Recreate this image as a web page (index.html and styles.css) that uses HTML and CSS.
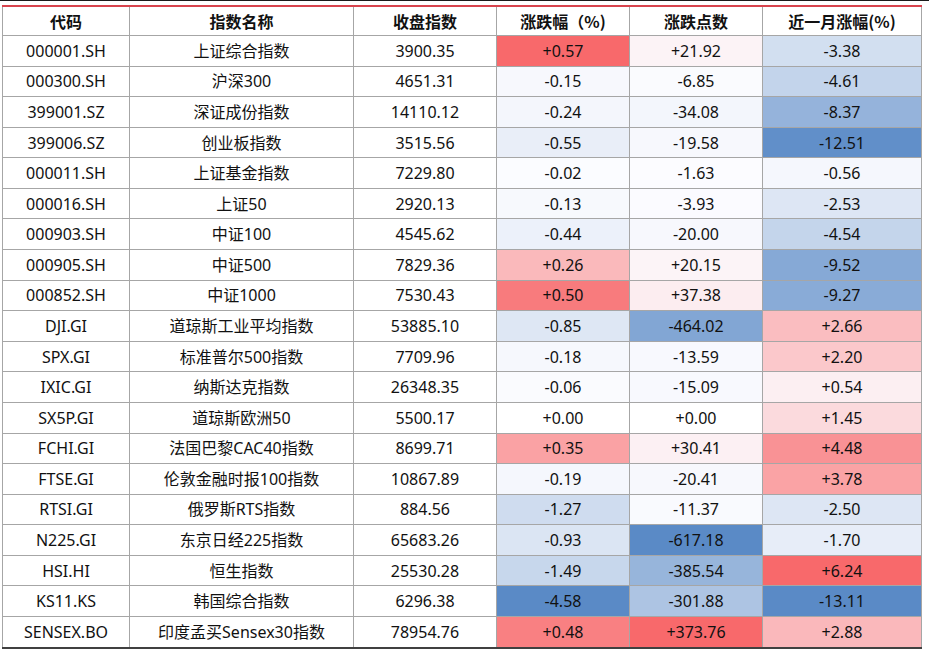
FILE: index.html
```html
<!DOCTYPE html>
<html lang="zh-CN">
<head>
<meta charset="utf-8">
<title>指数表现</title>
<link rel="stylesheet" href="styles.css">
</head>
<body>
<div class="topline"></div>
<div class="sheet">
  <div class="grid" id="grid">
    <div class="h">代码</div><div class="h">指数名称</div><div class="h">收盘指数</div><div class="h">涨跌幅（%)</div><div class="h">涨跌点数</div><div class="h">近一月涨幅(%)</div>
    <div>000001.SH</div><div>上证综合指数</div><div>3900.35</div><div class="c1">+0.57</div><div class="c2">+21.92</div><div class="c3">-3.38</div>
    <div>000300.SH</div><div>沪深300</div><div>4651.31</div><div class="c1">-0.15</div><div class="c2">-6.85</div><div class="c3">-4.61</div>
    <div>399001.SZ</div><div>深证成份指数</div><div>14110.12</div><div class="c1">-0.24</div><div class="c2">-34.08</div><div class="c3">-8.37</div>
    <div>399006.SZ</div><div>创业板指数</div><div>3515.56</div><div class="c1">-0.55</div><div class="c2">-19.58</div><div class="c3">-12.51</div>
    <div>000011.SH</div><div>上证基金指数</div><div>7229.80</div><div class="c1">-0.02</div><div class="c2">-1.63</div><div class="c3">-0.56</div>
    <div>000016.SH</div><div>上证50</div><div>2920.13</div><div class="c1">-0.13</div><div class="c2">-3.93</div><div class="c3">-2.53</div>
    <div>000903.SH</div><div>中证100</div><div>4545.62</div><div class="c1">-0.44</div><div class="c2">-20.00</div><div class="c3">-4.54</div>
    <div>000905.SH</div><div>中证500</div><div>7829.36</div><div class="c1">+0.26</div><div class="c2">+20.15</div><div class="c3">-9.52</div>
    <div>000852.SH</div><div>中证1000</div><div>7530.43</div><div class="c1">+0.50</div><div class="c2">+37.38</div><div class="c3">-9.27</div>
    <div>DJI.GI</div><div>道琼斯工业平均指数</div><div>53885.10</div><div class="c1">-0.85</div><div class="c2">-464.02</div><div class="c3">+2.66</div>
    <div>SPX.GI</div><div>标准普尔500指数</div><div>7709.96</div><div class="c1">-0.18</div><div class="c2">-13.59</div><div class="c3">+2.20</div>
    <div>IXIC.GI</div><div>纳斯达克指数</div><div>26348.35</div><div class="c1">-0.06</div><div class="c2">-15.09</div><div class="c3">+0.54</div>
    <div>SX5P.GI</div><div>道琼斯欧洲50</div><div>5500.17</div><div class="c1">+0.00</div><div class="c2">+0.00</div><div class="c3">+1.45</div>
    <div>FCHI.GI</div><div>法国巴黎CAC40指数</div><div>8699.71</div><div class="c1">+0.35</div><div class="c2">+30.41</div><div class="c3">+4.48</div>
    <div>FTSE.GI</div><div>伦敦金融时报100指数</div><div>10867.89</div><div class="c1">-0.19</div><div class="c2">-20.41</div><div class="c3">+3.78</div>
    <div>RTSI.GI</div><div>俄罗斯RTS指数</div><div>884.56</div><div class="c1">-1.27</div><div class="c2">-11.37</div><div class="c3">-2.50</div>
    <div>N225.GI</div><div>东京日经225指数</div><div>65683.26</div><div class="c1">-0.93</div><div class="c2">-617.18</div><div class="c3">-1.70</div>
    <div>HSI.HI</div><div>恒生指数</div><div>25530.28</div><div class="c1">-1.49</div><div class="c2">-385.54</div><div class="c3">+6.24</div>
    <div>KS11.KS</div><div>韩国综合指数</div><div>6296.38</div><div class="c1">-4.58</div><div class="c2">-301.88</div><div class="c3">-13.11</div>
    <div>SENSEX.BO</div><div>印度孟买Sensex30指数</div><div>78954.76</div><div class="c1">+0.48</div><div class="c2">+373.76</div><div class="c3">+2.88</div>
  </div>
</div>
<script src="script.js"></script>
</body>
</html>
```
FILE: styles.css
```css
html, body {
  margin: 0;
  padding: 0;
  background: #ffffff;
}
body {
  width: 929px;
  height: 657px;
  overflow: hidden;
  font-family: "Noto Sans", "Noto Sans CJK SC", sans-serif;
  color: #111111;
}
.topline {
  height: 1px;
  background: #1a1a1a;
}
.sheet {
  margin: 4px 0 0 2px;
  width: 920px;
}
.grid {
  display: grid;
  grid-template-columns: 126px 223px 142px 132px 132px 158px;
  grid-template-rows: 28px repeat(20, 29.58px);
  gap: 1px;
  background: #a6a6a6;
  padding: 0 1px 0 1px;
  border-top: 2px solid #d8434d;
  border-bottom: 2px solid #404040;
}
.grid > div {
  background: #ffffff;
  display: flex;
  align-items: center;
  justify-content: center;
  font-size: 16px;
  line-height: 1;
  white-space: nowrap;
}
.grid > .h {
  font-family: "Noto Sans CJK SC", "Noto Sans", sans-serif;
  font-weight: 700;
  font-size: 16px;
  color: #111111;
}
```
FILE: script.js
```js
(function () {
  var white = [252, 252, 255];
  var red = [248, 105, 107];
  var blue = [90, 138, 198];
  function mix(a, b, t) {
    return 'rgb(' + [0, 1, 2].map(function (i) {
      return Math.round(a[i] + (b[i] - a[i]) * t);
    }).join(',') + ')';
  }
  ['c1', 'c2', 'c3'].forEach(function (cls) {
    var cells = Array.prototype.slice.call(document.querySelectorAll('.' + cls));
    var vals = cells.map(function (c) { return parseFloat(c.textContent); });
    var max = Math.max.apply(null, vals);
    var min = Math.min.apply(null, vals);
    cells.forEach(function (c, i) {
      var v = vals[i];
      if (v > 0) c.style.background = mix(white, red, v / max);
      else if (v < 0) c.style.background = mix(white, blue, v / min);
      else c.style.background = '#ffffff';
    });
  });
})();
```
